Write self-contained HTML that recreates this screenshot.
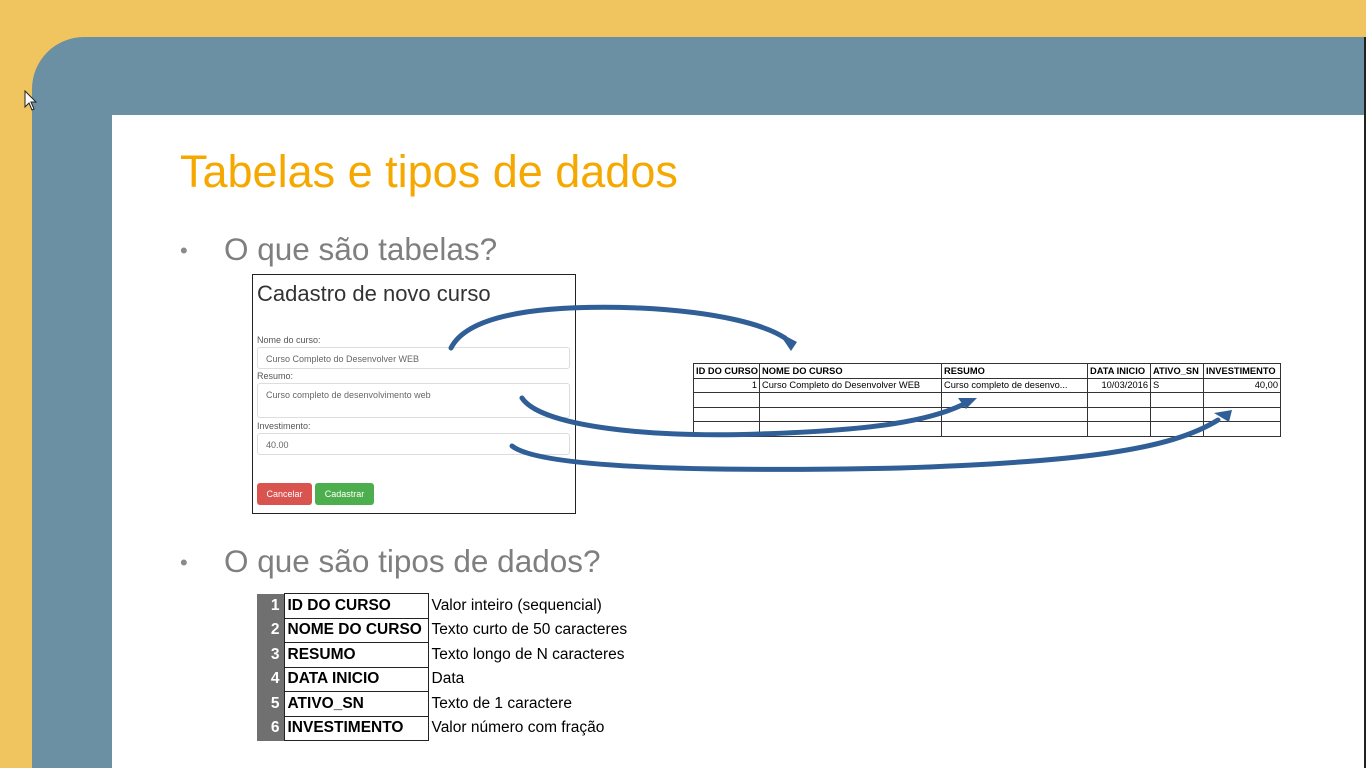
<!DOCTYPE html>
<html><head><meta charset="utf-8"><style>
*{margin:0;padding:0;box-sizing:border-box}
html,body{width:1366px;height:768px;overflow:hidden}
body{background:#F0C45E;position:relative;font-family:"Liberation Sans",Arial,sans-serif}
.frame{position:absolute;left:32px;top:37px;width:1334px;height:731px;background:#6B8FA3;border-top-left-radius:52px}
.white{position:absolute;left:112px;top:115px;width:1252px;height:653px;background:#fff}
.edge{position:absolute;left:1364px;top:37px;width:2px;height:731px;background:#222}
.abs{position:absolute}
.title{left:180px;top:146px;font-size:45px;color:#F5A800;white-space:nowrap}
.bul{font-size:31.5px;color:#7f7f7f;white-space:nowrap}
.dot{font-size:22px;color:#8a8a8a}
.form{left:252px;top:274px;width:324px;height:240px;border:1px solid #222;background:#fff}
.form h1{position:absolute;left:4px;top:6px;font-size:22px;font-weight:normal;color:#333}
.lbl{position:absolute;left:4px;font-size:9px;color:#555}
.inp{position:absolute;left:4px;width:313px;border:1px solid #ddd;border-radius:3px;font-size:9px;color:#666;padding:6px 8px}
.btn{position:absolute;top:208px;height:22px;border-radius:3px;color:#fff;font-size:9px;line-height:22px;text-align:center}
table{border-collapse:collapse}
.t1{left:693px;top:363px;font-family:"Liberation Sans Narrow","Liberation Sans",sans-serif;font-size:9.3px;color:#000;table-layout:fixed;width:587px}
.t1 td{border:1px solid #333;height:14.6px;padding:0 2px;white-space:nowrap;overflow:hidden}
.t2{left:257px;top:593px;font-size:15.5px}
.t2 td{height:24.5px;white-space:nowrap}
.n{background:#707070;color:#fff;font-weight:bold;width:27px;text-align:right;padding-right:4px}
.k{border:1px solid #222;font-weight:bold;width:144px;padding-left:3px;color:#000}
.v{padding-left:3px;color:#000}
</style></head><body>
<div class="frame"></div>
<div class="white"></div>
<div class="edge"></div>
<svg class="abs" style="left:24px;top:90px" width="14" height="22" viewBox="0 0 14 22"><path d="M1 1 L1 17 L5 13 L8 20 L10 19 L7 12 L12 12 Z" fill="#fff" stroke="#222" stroke-width="1"/></svg>
<div class="abs title">Tabelas e tipos de dados</div>
<div class="abs dot" style="left:180px;top:238px">•</div>
<div class="abs bul" style="left:224px;top:231px">O que são tabelas?</div>
<div class="abs dot" style="left:180px;top:550px">•</div>
<div class="abs bul" style="left:224px;top:543px">O que são tipos de dados?</div>
<div class="abs form">
<h1>Cadastro de novo curso</h1>
<div class="lbl" style="top:60px">Nome do curso:</div>
<div class="inp" style="top:72px;height:22px">Curso Completo do Desenvolver WEB</div>
<div class="lbl" style="top:96px">Resumo:</div>
<div class="inp" style="top:108px;height:35px">Curso completo de desenvolvimento web</div>
<div class="lbl" style="top:146px">Investimento:</div>
<div class="inp" style="top:158px;height:22px">40.00</div>
<div class="btn" style="left:4px;width:55px;background:#D9534F">Cancelar</div>
<div class="btn" style="left:62px;width:59px;background:#4CAE4C">Cadastrar</div>
</div>
<table class="abs t1">
<colgroup><col style="width:66px"><col style="width:182px"><col style="width:146px"><col style="width:63px"><col style="width:53px"><col style="width:77px"></colgroup>
<tr style="font-weight:bold"><td>ID DO CURSO</td><td>NOME DO CURSO</td><td>RESUMO</td><td>DATA INICIO</td><td>ATIVO_SN</td><td>INVESTIMENTO</td></tr>
<tr><td style="text-align:right">1</td><td>Curso Completo do Desenvolver WEB</td><td>Curso completo de desenvo...</td><td style="text-align:right">10/03/2016</td><td>S</td><td style="text-align:right">40,00</td></tr>
<tr><td></td><td></td><td></td><td></td><td></td><td></td></tr>
<tr><td></td><td></td><td></td><td></td><td></td><td></td></tr>
<tr><td></td><td></td><td></td><td></td><td></td><td></td></tr>
</table>
<svg class="abs" style="left:0;top:0" width="1366" height="768">
<g fill="none" stroke="#2F5F96" stroke-linecap="round">
<path d="M451 348 C470 310 560 305 640 308 C720 312 765 325 785 338" stroke-width="5"/>
<path d="M522 398 C540 425 640 438 760 434 C880 430 930 420 962 405" stroke-width="5"/>
<path d="M512 446 C540 468 700 472 900 468 C1080 462 1170 450 1218 420" stroke-width="5"/>
</g>
<g fill="#2F5F96">
<path d="M778 332 L797 342 L791 351 Z"/>
<path d="M958 398 L977 398 L966 409 Z"/>
<path d="M1214 413 L1232 410 L1229 422 Z"/>
</g>
</svg>
<table class="abs t2">
<tr><td class="n">1</td><td class="k">ID DO CURSO</td><td class="v">Valor inteiro (sequencial)</td></tr>
<tr><td class="n">2</td><td class="k">NOME DO CURSO</td><td class="v">Texto curto de 50 caracteres</td></tr>
<tr><td class="n">3</td><td class="k">RESUMO</td><td class="v">Texto longo de N caracteres</td></tr>
<tr><td class="n">4</td><td class="k">DATA INICIO</td><td class="v">Data</td></tr>
<tr><td class="n">5</td><td class="k">ATIVO_SN</td><td class="v">Texto de 1 caractere</td></tr>
<tr><td class="n">6</td><td class="k">INVESTIMENTO</td><td class="v">Valor número com fração</td></tr>
</table>
</body></html>
